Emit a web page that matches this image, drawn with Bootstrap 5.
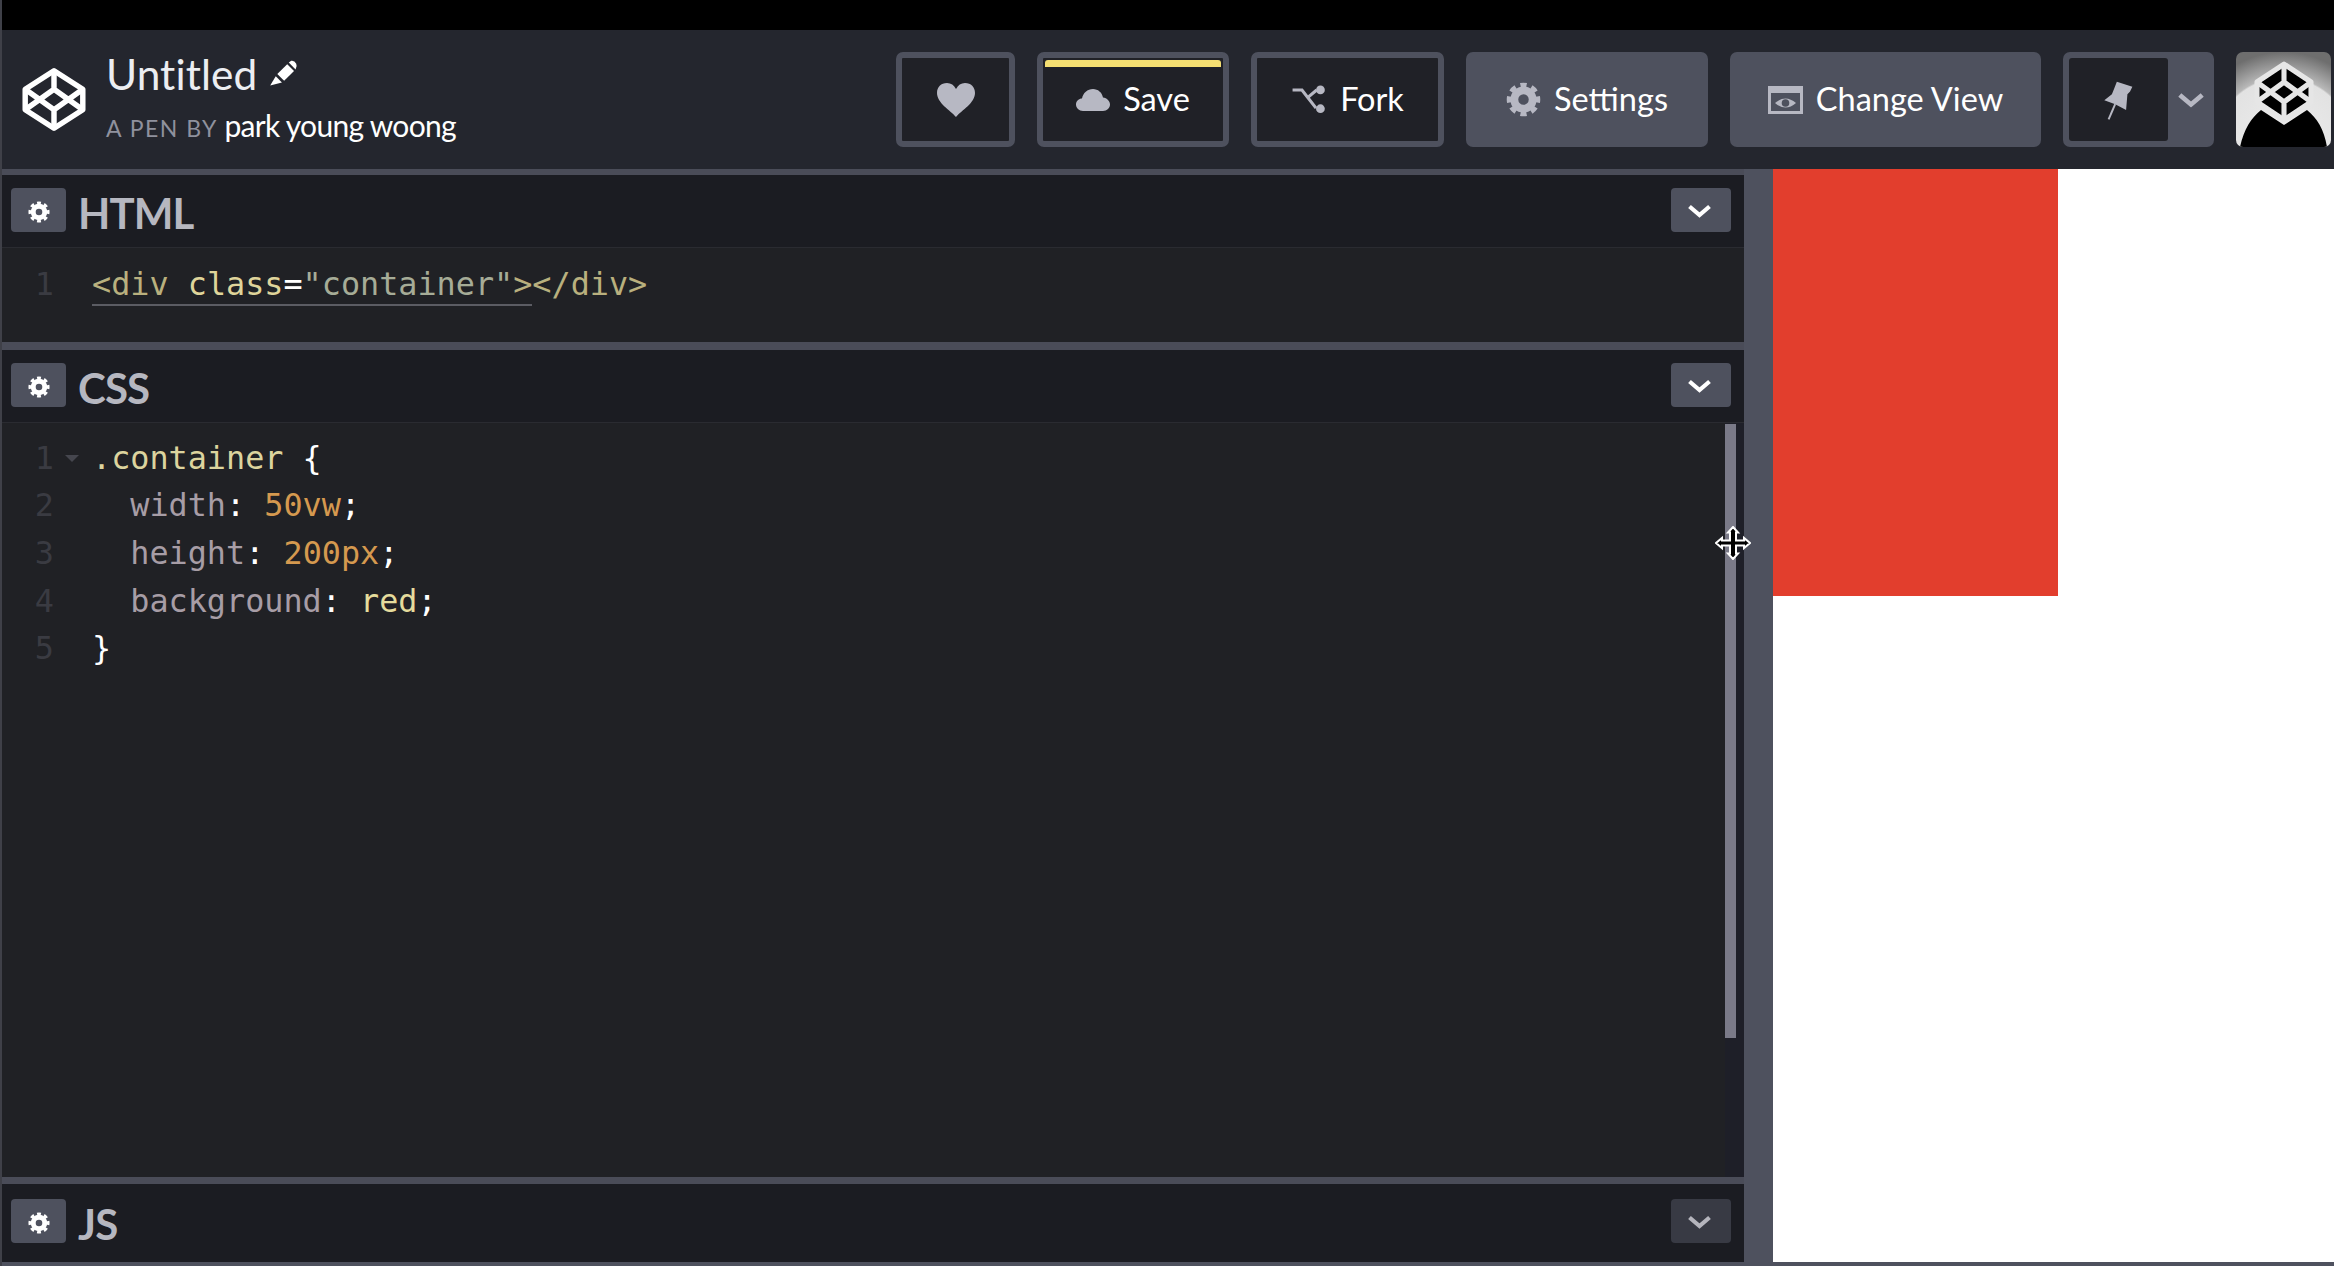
<!DOCTYPE html>
<html lang="en">
<head>
<meta charset="utf-8">
<title>Untitled</title>
<link href="https://cdn.jsdelivr.net/npm/bootstrap@5.3.0/dist/css/bootstrap.min.css" rel="stylesheet">
<style>
html,body{height:100%;}
body{background:#000;font-family:"Lato","Liberation Sans",sans-serif;overflow:hidden;color:#fff;border-left:2px solid #3f4048;position:relative;}
.blackbar{height:30px;background:#000;}
.pen-head{height:139px;background:#24262e;padding-left:20px;padding-right:3px;}
.logo-ico{width:64px;height:65px;color:#fff;margin-right:20px;}
.pen-block{margin-bottom:2px;}
.pen-title{font-size:42.4px;line-height:44px;font-weight:400;color:#eceef2;letter-spacing:.1px;}
.pen-title svg{width:31px;height:29px;margin-left:11px;vertical-align:3px;}
.pen-by{font-size:23px;line-height:34px;color:#8f919d;letter-spacing:1.5px;margin-top:12px;}
.pen-by b{font-size:30px;font-weight:400;color:#fff;letter-spacing:-.7px;}
.tools{gap:22px;}
.tbtn{height:95px;border-radius:7px;font-size:32.500px;font-family:inherit;line-height:1;color:#fff;padding:0;gap:13px;position:relative;}
.tbtn:hover,.tbtn:active{color:#fff;}
.tbtn-line{background:#202127;border:6px solid #4e515e;}
.tbtn-fill{background:#4e515e;border:0;}
.w-heart{width:119px}.w-save{width:192px}.w-fork{width:193px}.w-set{width:242px}.w-view{width:311px}
.savebar{position:absolute;left:2px;right:2px;top:2px;height:7px;background:#f5df72;border-radius:3px 3px 0 0;}
.pin-wrap{width:151px;height:95px;background:#4e515e;border-radius:7px;padding:6px 0 6px 6px;}
.pin-in{width:99px;height:83px;background:#202127;border-radius:3px;}
.avatar-box{width:95px;height:95px;border-radius:7px;overflow:hidden;}
.work{height:1093px;}
.left-side{width:1742px;background:#1b1c22;}
.drag-bar{width:29px;background:#4e515e;}
.result{flex:1;background:#fff;}
.red-block{width:285px;height:427px;background:#e23e2d;}
.pane-sep{height:6px;background:#4a4c58;}
.pane-sep.thick{height:8px;}
.pane-sep.js-sep{height:7px;}
.pane-head{height:73px;background:#1b1c22;padding:0 13px 2px 9px;}
.pane-line{border-bottom:1px solid #2a2b31;}
.js-head{height:76px;}
.gear-btn{width:55px;height:44px;background:#4e515e;border-radius:4px;margin-right:12px;padding-top:3px;}
.gear-btn svg{width:22px;height:22px;color:#fff;}
.pane-name{font-size:42px;font-weight:700;color:#b6b7c0;letter-spacing:-.9px;line-height:1;padding-top:6px;}
.chev-btn{width:60px;height:44px;background:#4e515e;border-radius:4px;padding-right:4px;padding-top:2px;}
.chev-btn.dim{background:#383a44;}
.chev-btn svg{width:25px;height:14px;color:#fff;}
.chev-btn.dim svg{color:#b5b5bd;}
.code-area{background:#202125;}
.h-html{height:94px;padding-top:11.500px;}
.h-css{height:754px;padding-top:10.500px;}
.cline{height:47.7px;line-height:47.7px;font-family:"DejaVu Sans Mono","Liberation Mono",monospace;font-size:31.8px;white-space:pre;}
.gnum{width:52px;text-align:right;color:#3a3b42;}
.gfold{width:38px;}
.gfold i{display:block;width:0;height:0;border-left:7px solid transparent;border-right:7px solid transparent;border-top:7px solid #45464e;margin:21px 0 0 11px;}
.t-tag{color:#b9b07e}.t-attr{color:#dfd49a}.t-eq{color:#fff}.t-str{color:#a6ac97}
.t-sel{color:#dcd49e}.t-pl{color:#fff}.t-prop{color:#a79da6}.t-num{color:#d5994f}.t-val{color:#e5dc9c}
.t-mark{border-bottom:2px solid #5b5c63;padding-bottom:2px;}
.code-flow{flex:1;position:relative;}
.scroll-col{width:19px;background:#1e1f28;}
.scroll-thumb{width:11px;height:614px;margin-top:1px;background:#7a7a88;}
.move-cursor{position:absolute;left:1713px;top:526px;width:36px;height:34px;}
.foot-strip{height:4px;background:#4e515e;}
.ico{color:#b7b8c3;display:block;flex:none;}
</style>
</head>
<body>
<svg width="0" height="0" class="position-absolute">
  <symbol id="cp" viewBox="0 0 100 100">
    <g fill="none" stroke="currentColor" stroke-width="8.500" stroke-linejoin="round">
      <path d="M50 5 95 34V66L50 95 5 66V34Z"/>
      <path d="M5 34 50 66 95 34M5 66 50 34 95 66M50 5V34M50 66V95"/>
    </g>
  </symbol>
  <symbol id="cog" viewBox="0 0 24 24">
    <circle cx="12" cy="12" r="6.300" fill="none" stroke="currentColor" stroke-width="5.400"/>
    <circle cx="12" cy="12" r="9.700" fill="none" stroke="currentColor" stroke-width="3.600" pathLength="80" stroke-dasharray="5.500 4.500" stroke-dashoffset="2.750"/>
  </symbol>
  <symbol id="chev" viewBox="0 0 25 14">
    <path d="M2.500 2.500 12.500 11 22.500 2.500" fill="none" stroke="currentColor" stroke-width="4.200"/>
  </symbol>
</svg>

<div class="blackbar"></div>

<header class="pen-head d-flex align-items-center justify-content-between">
  <div class="d-flex align-items-center">
    <svg class="logo-ico"><use href="#cp"/></svg>
    <div class="pen-block">
      <div class="pen-title">Untitled<svg viewBox="805 25 100 90" fill="#fff"><path d="M835 75 867 43 889 65 857 97Z"/><path d="M872 38 880 32Q890 30 896 42 900 50 894 60Z"/><path d="M830 82 850 102 812 112Z"/></svg></div>
      <div class="pen-by">A PEN BY <b>park young woong</b></div>
    </div>
  </div>
  <div class="tools d-flex align-items-center">
    <button class="btn tbtn tbtn-line w-heart d-flex align-items-center justify-content-center" aria-label="Love">
      <svg class="ico" width="38" height="34" viewBox="0 0 38 34" fill="currentColor"><path d="M19 34C13 27 0 20 0 10 0 4 4 0 10 0c4 0 7 2 9 6 2-4 5-6 9-6 6 0 10 4 10 10 0 10-13 17-19 24z"/></svg>
    </button>
    <button class="btn tbtn tbtn-line w-save d-flex align-items-center justify-content-center">
      <span class="savebar"></span>
      <svg class="ico" width="34" height="22" viewBox="0 0 34 22" fill="currentColor"><path d="M7 22C3 22 0 19 0 15.500 0 12 3 9.500 6 9.500 7 4 11.500 0 17 0c5 0 9 3.500 10 8.500 4 .5 7 3.500 7 7 0 3.500-3 6.500-7 6.500z"/></svg>
      <span>Save</span>
    </button>
    <button class="btn tbtn tbtn-line w-fork d-flex align-items-center justify-content-center">
      <svg class="ico" width="36" height="33" viewBox="750 100 115 105"><path d="M755 122H785L830 180M805 145 832 122" fill="none" stroke="currentColor" stroke-width="10"/><circle cx="844" cy="122" r="14" fill="currentColor"/><circle cx="844" cy="182" r="14" fill="currentColor"/></svg>
      <span>Fork</span>
    </button>
    <button class="btn tbtn tbtn-fill w-set d-flex align-items-center justify-content-center">
      <svg class="ico" width="35" height="35"><use href="#cog"/></svg>
      <span>Settings</span>
    </button>
    <button class="btn tbtn tbtn-fill w-view d-flex align-items-center justify-content-center">
      <svg class="ico" width="35" height="28" viewBox="0 0 35 28"><rect x="1.500" y="1.500" width="32" height="25" fill="none" stroke="currentColor" stroke-width="3"/><rect x="0" y="0" width="35" height="7" fill="currentColor"/><path d="M7 17Q17.500 8 28 17 17.500 26 7 17Z" fill="currentColor"/><circle cx="17.500" cy="17" r="3.800" fill="#4e515e"/></svg>
      <span>Change View</span>
    </button>
    <div class="pin-wrap d-flex align-items-center">
      <div class="pin-in d-flex align-items-center justify-content-center">
        <svg class="ico" width="33" height="42" viewBox="185 115 100 125"><path d="M230 122 277 137 270 152 262 160 258 208 225 190 192 178 215 160 222 143Z" fill="currentColor"/><path d="M225 190 205 236" stroke="currentColor" stroke-width="6"/></svg>
      </div>
      <div class="flex-grow-1 d-flex justify-content-center">
        <svg class="ico" width="28" height="16" viewBox="0 0 25 14"><use href="#chev"/></svg>
      </div>
    </div>
    <div class="avatar-box">
      <svg width="95" height="95" viewBox="0 0 95 95">
        <defs><radialGradient id="ag" cx="50%" cy="100%" r="100%"><stop offset="0" stop-color="#eee"/><stop offset=".72" stop-color="#e2e2e2"/><stop offset=".74" stop-color="#b8b8b8"/><stop offset="1" stop-color="#6e6e6e"/></radialGradient></defs>
        <rect width="95" height="95" fill="url(#ag)"/>
        <path d="M4 95C8 77 15 66 25 58L48 73 71 58C81 66 88 77 91 95Z" fill="#000"/>
        <path d="M48 12 76 29V51L48 68 20 51V29Z" fill="#000"/>
        <svg x="18" y="9" width="60" height="62" viewBox="0 0 100 100" preserveAspectRatio="none" color="#e6e6e6"><use href="#cp"/></svg>
      </svg>
    </div>
  </div>
</header>

<main class="work d-flex">
  <div class="left-side d-flex flex-column">
    <section>
      <div class="pane-sep"></div>
      <div class="pane-head pane-line d-flex align-items-center">
        <span class="gear-btn d-flex align-items-center justify-content-center"><svg><use href="#cog"/></svg></span>
        <span class="pane-name flex-grow-1">HTML</span>
        <span class="chev-btn d-flex align-items-center justify-content-center"><svg><use href="#chev"/></svg></span>
      </div>
      <div class="code-area h-html">
        <div class="cline d-flex"><span class="gnum">1</span><span class="gfold"></span><span><span class="t-mark"><span class="t-tag">&lt;div</span> <span class="t-attr">class</span><span class="t-eq">=</span><span class="t-str">"container"</span><span class="t-tag">&gt;</span></span><span class="t-tag">&lt;/div&gt;</span></span></div>
      </div>
    </section>
    <section>
      <div class="pane-sep thick"></div>
      <div class="pane-head pane-line d-flex align-items-center">
        <span class="gear-btn d-flex align-items-center justify-content-center"><svg><use href="#cog"/></svg></span>
        <span class="pane-name flex-grow-1">CSS</span>
        <span class="chev-btn d-flex align-items-center justify-content-center"><svg><use href="#chev"/></svg></span>
      </div>
      <div class="d-flex">
        <div class="code-area code-flow h-css">
          <div class="cline d-flex"><span class="gnum">1</span><span class="gfold"><i></i></span><span><span class="t-sel">.container</span> <span class="t-pl">{</span></span></div>
          <div class="cline d-flex"><span class="gnum">2</span><span class="gfold"></span><span>  <span class="t-prop">width</span><span class="t-pl">:</span> <span class="t-num">50vw</span><span class="t-pl">;</span></span></div>
          <div class="cline d-flex"><span class="gnum">3</span><span class="gfold"></span><span>  <span class="t-prop">height</span><span class="t-pl">:</span> <span class="t-num">200px</span><span class="t-pl">;</span></span></div>
          <div class="cline d-flex"><span class="gnum">4</span><span class="gfold"></span><span>  <span class="t-prop">background</span><span class="t-pl">:</span> <span class="t-val">red</span><span class="t-pl">;</span></span></div>
          <div class="cline d-flex"><span class="gnum">5</span><span class="gfold"></span><span class="t-pl">}</span></div>
        </div>
        <div class="scroll-col"><div class="scroll-thumb"></div></div>
      </div>
    </section>
    <section>
      <div class="pane-sep js-sep"></div>
      <div class="pane-head js-head d-flex align-items-center">
        <span class="gear-btn d-flex align-items-center justify-content-center"><svg><use href="#cog"/></svg></span>
        <span class="pane-name flex-grow-1">JS</span>
        <span class="chev-btn dim d-flex align-items-center justify-content-center"><svg><use href="#chev"/></svg></span>
      </div>
    </section>
  </div>
  <div class="drag-bar"></div>
  <div class="result"><div class="red-block"></div></div>
</main>
<div class="foot-strip"></div>

<svg class="move-cursor" viewBox="0 0 36 34" aria-hidden="true">
  <path d="M18 1 23 6.500H21V14.500H29V12L35 17 29 22V19.500H21V27.500H23L18 33 13 27.500H15V19.500H7V22L1 17 7 12V14.500H15V6.500H13Z" fill="#000" stroke="#fff" stroke-width="2"/>
</svg>
<script src="https://cdn.jsdelivr.net/npm/bootstrap@5.3.0/dist/js/bootstrap.bundle.min.js"></script>
</body>
</html>
